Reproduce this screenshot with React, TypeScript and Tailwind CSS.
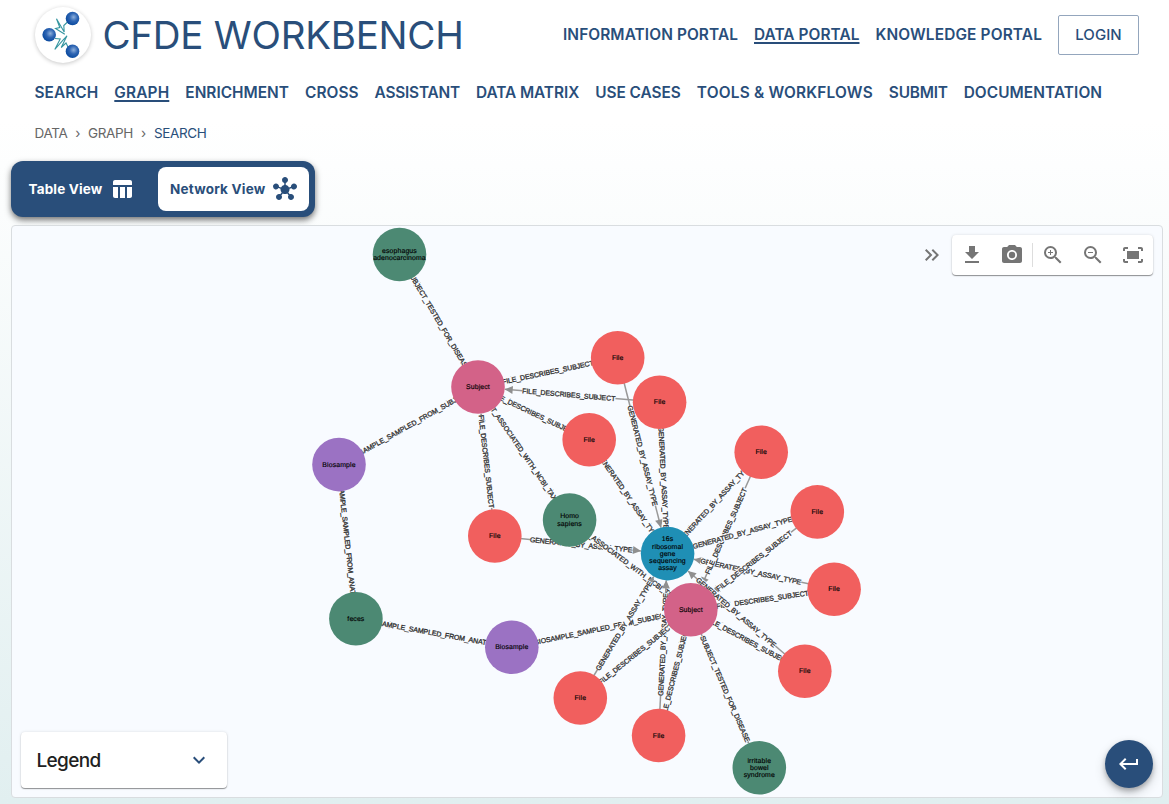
import { useLayoutEffect, useRef, useState } from "react";
import {
  MdTableChart, MdHub, MdFileDownload, MdPhotoCamera, MdZoomIn, MdZoomOut,
  MdFitScreen, MdKeyboardDoubleArrowRight, MdExpandMore, MdKeyboardReturn,
} from "react-icons/md";

/* Text tracked so that it fills exactly the given width. */
function Fit({ text, w, className = "", active = false }: { text: string; w: number; className?: string; active?: boolean }) {
  const ref = useRef<HTMLSpanElement>(null);
  const [tracking, setTracking] = useState(0);
  useLayoutEffect(() => {
    if (ref.current) {
      setTracking((w - ref.current.getBoundingClientRect().width) / text.length);
    }
  }, [w, text]);
  return (
    <span className={`block ${className}`} style={{ width: w }}>
      <span
        ref={ref}
        className={`inline-block whitespace-nowrap ${active ? "underline decoration-2 underline-offset-2 [text-decoration-skip-ink:none]" : ""}`}
        style={{ letterSpacing: tracking }}
      >
        {text}
      </span>
    </span>
  );
}

type Kind = "file" | "subject" | "bio" | "term" | "assay";
const FILL: Record<Kind, string> = {
  file: "#f15f5e", subject: "#d36288", bio: "#9b72c3", term: "#4c8973", assay: "#1f8fb5",
};

const NODES: Record<string, { x: number; y: number; kind: Kind; lines: string[] }> = {
  eso: { x: 399.5, y: 254.5, kind: "term", lines: ["esophagus", "adenocarcinoma"] },
  s1: { x: 478, y: 387, kind: "subject", lines: ["Subject"] },
  a: { x: 617.7, y: 357.7, kind: "file", lines: ["File"] },
  b: { x: 659.6, y: 402.3, kind: "file", lines: ["File"] },
  c: { x: 589.2, y: 439.8, kind: "file", lines: ["File"] },
  d: { x: 494.8, y: 536, kind: "file", lines: ["File"] },
  e: { x: 761.2, y: 452.2, kind: "file", lines: ["File"] },
  f: { x: 817.3, y: 511.9, kind: "file", lines: ["File"] },
  g: { x: 834.1, y: 589.3, kind: "file", lines: ["File"] },
  h: { x: 804.8, y: 671.3, kind: "file", lines: ["File"] },
  i: { x: 580.3, y: 698, kind: "file", lines: ["File"] },
  j: { x: 658.6, y: 735.5, kind: "file", lines: ["File"] },
  b1: { x: 339, y: 464.6, kind: "bio", lines: ["Biosample"] },
  b2: { x: 511.8, y: 647.2, kind: "bio", lines: ["Biosample"] },
  feces: { x: 355.9, y: 618.8, kind: "term", lines: ["feces"] },
  homo: { x: 569.6, y: 520, kind: "term", lines: ["Homo", "sapiens"] },
  assay: { x: 667.6, y: 553.6, kind: "assay", lines: ["16s", "ribosomal", "gene", "sequencing", "assay"] },
  s2: { x: 690.8, y: 609.8, kind: "subject", lines: ["Subject"] },
  ibs: { x: 759.3, y: 767.8, kind: "term", lines: ["irritable", "bowel", "syndrome"] },
};

const FDS = "FILE_DESCRIBES_SUBJECT";
const GEN = "GENERATED_BY_ASSAY_TYPE";
const TAX = "SUBJECT_ASSOCIATED_WITH_NCBI_TAXONOMY";
const DIS = "SUBJECT_TESTED_FOR_DISEASE";
const BFS = "BIOSAMPLE_SAMPLED_FROM_SUBJECT";
const BFA = "BIOSAMPLE_SAMPLED_FROM_ANATOMY";

const EDGES: [string, string, string, number][] = [
  ["s1", "eso", DIS, 115],
  ["a", "s1", FDS, 93.5],
  ["b", "s1", FDS, 93.5],
  ["c", "s1", FDS, 93.5],
  ["d", "s1", FDS, 93.5],
  ["b1", "s1", BFS, 137],
  ["b1", "feces", BFA, 138],
  ["b2", "feces", BFA, 138],
  ["s1", "homo", TAX, 165],
  ["b2", "s2", BFS, 137],
  ["d", "assay", GEN, 103],
  ["g", "assay", GEN, 103],
  ["e", "s2", FDS, 93.5],
  ["j", "s2", FDS, 93.5],
  ["g", "s2", FDS, 93.5],
  ["h", "s2", FDS, 93.5],
  ["s2", "ibs", DIS, 115],
  ["s2", "homo", TAX, 165],
  ["f", "s2", FDS, 93.5],
  ["a", "assay", GEN, 103],
  ["b", "assay", GEN, 103],
  ["c", "assay", GEN, 103],
  ["e", "assay", GEN, 103],
  ["f", "assay", GEN, 103],
  ["h", "assay", GEN, 103],
  ["i", "assay", GEN, 103],
  ["j", "assay", GEN, 103],
  ["i", "s2", FDS, 93.5],
];

const R = 26.8;

function Edge({ from, to, label, width }: { from: string; to: string; label: string; width: number }) {
  const p = NODES[from];
  const q = NODES[to];
  const dir = Math.atan2(q.y - p.y, q.x - p.x);
  const deg = (dir * 180) / Math.PI;
  const upright = deg > 90 ? deg - 180 : deg < -90 ? deg + 180 : deg;
  const tx = q.x - Math.cos(dir) * R;
  const ty = q.y - Math.sin(dir) * R;
  return (
    <g>
      <line x1={p.x} y1={p.y} x2={tx} y2={ty} stroke="#999999" strokeWidth="1.5" />
      <path d="M0 0L-8 -4L-8 4Z" fill="#8f8f8f" transform={`translate(${tx} ${ty}) rotate(${deg})`} />
      <g transform={`translate(${(p.x + q.x) / 2} ${(p.y + q.y) / 2}) rotate(${upright})`}>
        <rect x={-width / 2} y="-3.6" width={width} height="7.2" fill="#f8fbff" />
        <text y="2.5" textAnchor="middle" textLength={width} fontSize="7" fill="#383838" stroke="#383838" strokeWidth="0.34" textRendering="geometricPrecision">{label}</text>
      </g>
    </g>
  );
}

function Graph() {
  return (
    <svg className="block h-full w-full font-['Liberation_Sans',sans-serif]" viewBox="12 226 1150 571">
      {EDGES.map(([from, to, label, width]) => (
        <Edge key={from + to} from={from} to={to} label={label} width={width} />
      ))}
      {Object.entries(NODES).map(([id, n]) => (
        <g key={id}>
          <circle cx={n.x} cy={n.y} r={R} fill={FILL[n.kind]} />
          {n.lines.map((line, k) => (
            <text key={line} x={n.x} y={n.y + 2 + (k - (n.lines.length - 1) / 2) * 7.1} textAnchor="middle" fontSize="6.9" letterSpacing="0.12" fill="#000000" stroke="#000000" strokeWidth="0.15" textRendering="geometricPrecision">{line}</text>
          ))}
        </g>
      ))}
    </svg>
  );
}

function Logo() {
  return (
    <div className="h-14 w-14 rounded-full bg-white shadow-[0_1px_4px_rgba(0,0,0,0.22)]">
      <svg viewBox="0 0 56 56" className="h-14 w-14">
        <defs>
          <radialGradient id="ball" cx="0.58" cy="0.4" r="0.6">
            <stop offset="0" stopColor="#8eb0dc" />
            <stop offset="0.5" stopColor="#2e65b3" />
            <stop offset="1" stopColor="#0a4a9f" />
          </radialGradient>
        </defs>
        <g fill="none" stroke="#3595a0" strokeWidth="1.1" strokeLinejoin="miter">
          <path d="M33 14.5L28.8 18.5L29.2 25L21.5 11.8L24.8 20.5L20.5 21.5L29.8 27.2" />
          <path d="M20 31.5L25.2 32L19.8 42.5L28 33.2L32 28.8L26.2 40.5L31 36L33.5 41" />
        </g>
        <circle cx="37.5" cy="11.5" r="6.8" fill="url(#ball)" />
        <circle cx="14.2" cy="27.8" r="6.8" fill="url(#ball)" />
        <circle cx="37.5" cy="44.3" r="6.8" fill="url(#ball)" />
      </svg>
    </div>
  );
}

const PORTALS: [string, number][] = [["INFORMATION PORTAL", 175], ["DATA PORTAL", 105.5], ["KNOWLEDGE PORTAL", 166.5]];
const LINKS: [string, number][] = [
  ["SEARCH", 63.8], ["GRAPH", 55], ["ENRICHMENT", 103.7], ["CROSS", 53.6], ["ASSISTANT", 85.4], ["DATA MATRIX", 103.2],
  ["USE CASES", 85.7], ["TOOLS & WORKFLOWS", 176], ["SUBMIT", 58.8], ["DOCUMENTATION", 138.5],
];

export default function App() {
  return (
    <div className="flex h-[804px] w-full flex-col overflow-hidden bg-linear-to-b from-white from-15% to-[#e1eff0] font-['Inter',sans-serif] text-[#294e7a]">
      <header className="flex h-[70px] shrink-0 items-center pr-[30px] pl-[35px]">
        <Logo />
        <h1 className="ml-[11.5px] text-[38.5px] leading-[56px] font-normal">
          <Fit text="CFDE WORKBENCH" w={361} />
        </h1>
        <nav className="ml-auto flex items-center gap-4 text-[15.4px] leading-5 font-semibold">
          {PORTALS.map(([t, w], k) => (
            <Fit key={t} text={t} w={w} active={k === 1} />
          ))}
          <button className="flex h-10 w-[81px] items-center justify-center rounded-xs border border-[#94a6bd] text-[15px] font-medium">
            <Fit text="LOGIN" w={46.5} />
          </button>
        </nav>
      </header>
      <nav className="flex h-[46px] shrink-0 items-center gap-4 pl-[34.5px] text-[15.4px] leading-5 font-semibold">
        {LINKS.map(([t, w], k) => (
          <Fit key={t} text={t} w={w} active={k === 1} />
        ))}
      </nav>
      <div className="flex h-[34px] shrink-0 items-center pl-[34.5px] text-[13.5px] leading-5 text-[#666666]">
        <Fit text="DATA" w={33} />
        <span className="w-[20.5px] text-center">›</span>
        <Fit text="GRAPH" w={45} />
        <span className="w-[21px] text-center">›</span>
        <Fit text="SEARCH" w={52.5} className="text-[#294e7a]" />
      </div>
      <div className="mt-[11px] ml-[11px] flex h-14 w-[304px] shrink-0 items-center rounded-xl bg-[#294e7a] pr-1.5 pl-[17.5px] text-[13.5px] leading-5 font-bold shadow-[0_3px_6px_rgba(0,0,0,0.55)]">
        <Fit text="Table View" w={74} className="text-white" />
        <MdTableChart className="ml-[7px] h-6 w-6 text-white" />
        <div className="ml-auto flex h-11 w-[151px] items-center rounded-lg bg-white pl-3">
          <Fit text="Network View" w={95.5} />
          <MdHub className="ml-[7.5px] h-6 w-6" />
        </div>
      </div>
      <main className="relative mt-2 ml-[11px] h-[573px] w-[1152px] shrink-0 rounded border border-[#d9dde0] bg-[#f8fbff]">
        <Graph />
        <div className="absolute top-[9px] right-[9px] flex items-center text-[#757575]">
          <MdKeyboardDoubleArrowRight className="mr-2 h-6 w-6" />
          <div className="flex h-10 w-[201px] items-center rounded bg-white shadow-[0_1px_1px_rgba(0,0,0,0.4),0_0_3px_rgba(0,0,0,0.12)]">
            <span className="flex w-10 justify-center"><MdFileDownload className="h-6 w-6" /></span>
            <span className="flex w-10 justify-center"><MdPhotoCamera className="h-6 w-6" /></span>
            <span className="h-6 w-px bg-[#dddddd]" />
            <span className="flex w-10 justify-center"><MdZoomIn className="h-6 w-6" /></span>
            <span className="flex w-10 justify-center"><MdZoomOut className="h-6 w-6" /></span>
            <span className="flex w-10 justify-center"><MdFitScreen className="h-6 w-6" /></span>
          </div>
        </div>
        <div className="absolute bottom-[9px] left-[9px] flex h-14 w-[206px] items-center justify-between rounded bg-white pr-4 pl-[15.5px] text-[19px] leading-7 font-medium text-[#212121] shadow-[0_1px_1px_rgba(0,0,0,0.4),0_0_3px_rgba(0,0,0,0.12)]">
          <Fit text="Legend" w={64} className="pt-0.5" />
          <MdExpandMore className="h-6 w-6 text-[#294e7a]" />
        </div>
        <button className="absolute right-[9px] bottom-[9px] flex h-12 w-12 items-center justify-center rounded-full bg-[#294e7a] text-white shadow-[0_3px_5px_rgba(0,0,0,0.25),0_5px_12px_rgba(0,0,0,0.16)]">
          <MdKeyboardReturn className="h-6 w-6" />
        </button>
      </main>
    </div>
  );
}
